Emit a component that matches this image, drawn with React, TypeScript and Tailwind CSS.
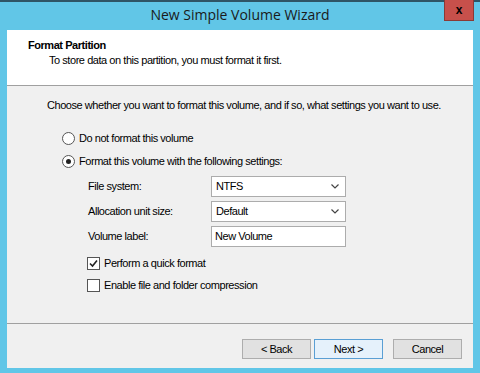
import { useState } from 'react'

function Radio({ checked, label, onClick }: { checked: boolean; label: string; onClick: () => void }) {
  return (
    <div className="flex items-center h-[13px] gap-[4px] cursor-default" onClick={onClick}>
      <span className="w-[13px] h-[13px] rounded-full border border-[#555] bg-white flex items-center justify-center">
        {checked && <span className="w-[5px] h-[5px] rounded-full bg-[#222]" />}
      </span>
      <span>{label}</span>
    </div>
  )
}

function Check({ checked, label, onClick }: { checked: boolean; label: string; onClick: () => void }) {
  return (
    <div className="flex items-center h-[13px] gap-[4px] cursor-default" onClick={onClick}>
      <span className="w-[13px] h-[13px] border border-[#555] bg-white flex items-center justify-center">
        {checked && (
          <svg width="9" height="9" viewBox="0 0 9 9">
            <path d="M1 4.5 L3.5 7 L8 1.5" fill="none" stroke="#222" strokeWidth="1.6" />
          </svg>
        )}
      </span>
      <span>{label}</span>
    </div>
  )
}

function Select({ value }: { value: string }) {
  return (
    <div className="w-[135px] h-[21px] border border-[#acacac] bg-white flex items-center justify-between pl-[4px] pr-[6px]">
      <span>{value}</span>
      <svg width="8" height="5" viewBox="0 0 8 5">
        <path d="M0.5 0.5 L4 4 L7.5 0.5" fill="none" stroke="#444" strokeWidth="1.2" />
      </svg>
    </div>
  )
}

function Btn({ label, focus }: { label: string; focus?: boolean }) {
  return (
    <button
      className={
        'w-[69px] h-[20px] border text-[11px] leading-none ' +
        (focus ? 'border-[#5a9fd4] bg-[#e5f1fb]' : 'border-[#adadad] bg-[#e1e1e1]')
      }
    >
      {label}
    </button>
  )
}

export default function App() {
  const [format, setFormat] = useState(true)
  const [quick, setQuick] = useState(true)
  const [compress, setCompress] = useState(false)

  return (
    <div
      className="w-[480px] h-[373px] bg-[#61c6e7] border-t-2 border-[#2f5566] flex flex-col text-[11px] text-black"
      style={{ fontFamily: '"Liberation Sans", Arial, sans-serif' }}
    >
      <div className="relative h-[28px] flex items-center justify-center">
        <span className="text-[14px] text-[#1a1a1a] -mt-[3px]" style={{ fontFamily: '"Open Sans", sans-serif' }}>
          New Simple Volume Wizard
        </span>
        <div className="absolute right-[6px] -top-[2px] w-[30px] h-[21px] bg-[#c7504b] border border-[#8a3a36] border-t-0 flex items-center justify-center">
          <span className="font-bold text-[12px] leading-none">x</span>
        </div>
      </div>

      <div className="flex-1 mx-[7px] mb-[5px] bg-[#f0f0f0] flex flex-col tracking-[-0.45px]">
        <div className="h-[56px] bg-white border-b border-[#a0a0a0] pl-[21px] pt-[8px] leading-[15px]">
          <div className="font-bold">Format Partition</div>
          <div className="pl-[21px]">To store data on this partition, you must format it first.</div>
        </div>

        <div className="flex-1 pl-[40px] pt-[11px]">
          <div className="whitespace-nowrap">Choose whether you want to format this volume, and if so, what settings you want to use.</div>

          <div className="pl-[15px] mt-[18px] flex flex-col gap-[10px]">
            <Radio checked={!format} label="Do not format this volume" onClick={() => setFormat(false)} />
            <Radio checked={format} label="Format this volume with the following settings:" onClick={() => setFormat(true)} />
          </div>

          <div className="pl-[41px] mt-[8px] grid grid-cols-[123px_135px] gap-y-[4px] items-center">
            <span>File system:</span>
            <Select value="NTFS" />
            <span>Allocation unit size:</span>
            <Select value="Default" />
            <span>Volume label:</span>
            <div className="w-[135px] h-[21px] border border-[#acacac] bg-white flex items-center pl-[3px]">New Volume</div>
          </div>

          <div className="pl-[40px] mt-[10px] flex flex-col gap-[9px]">
            <Check checked={quick} label="Perform a quick format" onClick={() => setQuick(!quick)} />
            <Check checked={compress} label="Enable file and folder compression" onClick={() => setCompress(!compress)} />
          </div>
        </div>

        <div className="h-[45px] border-t border-[#a0a0a0] flex justify-end items-start pt-[15px] pr-[11px]">
          <div className="flex gap-[3px]">
            <Btn label="< Back" />
            <Btn label="Next >" focus />
          </div>
          <div className="ml-[10px]">
            <Btn label="Cancel" />
          </div>
        </div>
      </div>
    </div>
  )
}
